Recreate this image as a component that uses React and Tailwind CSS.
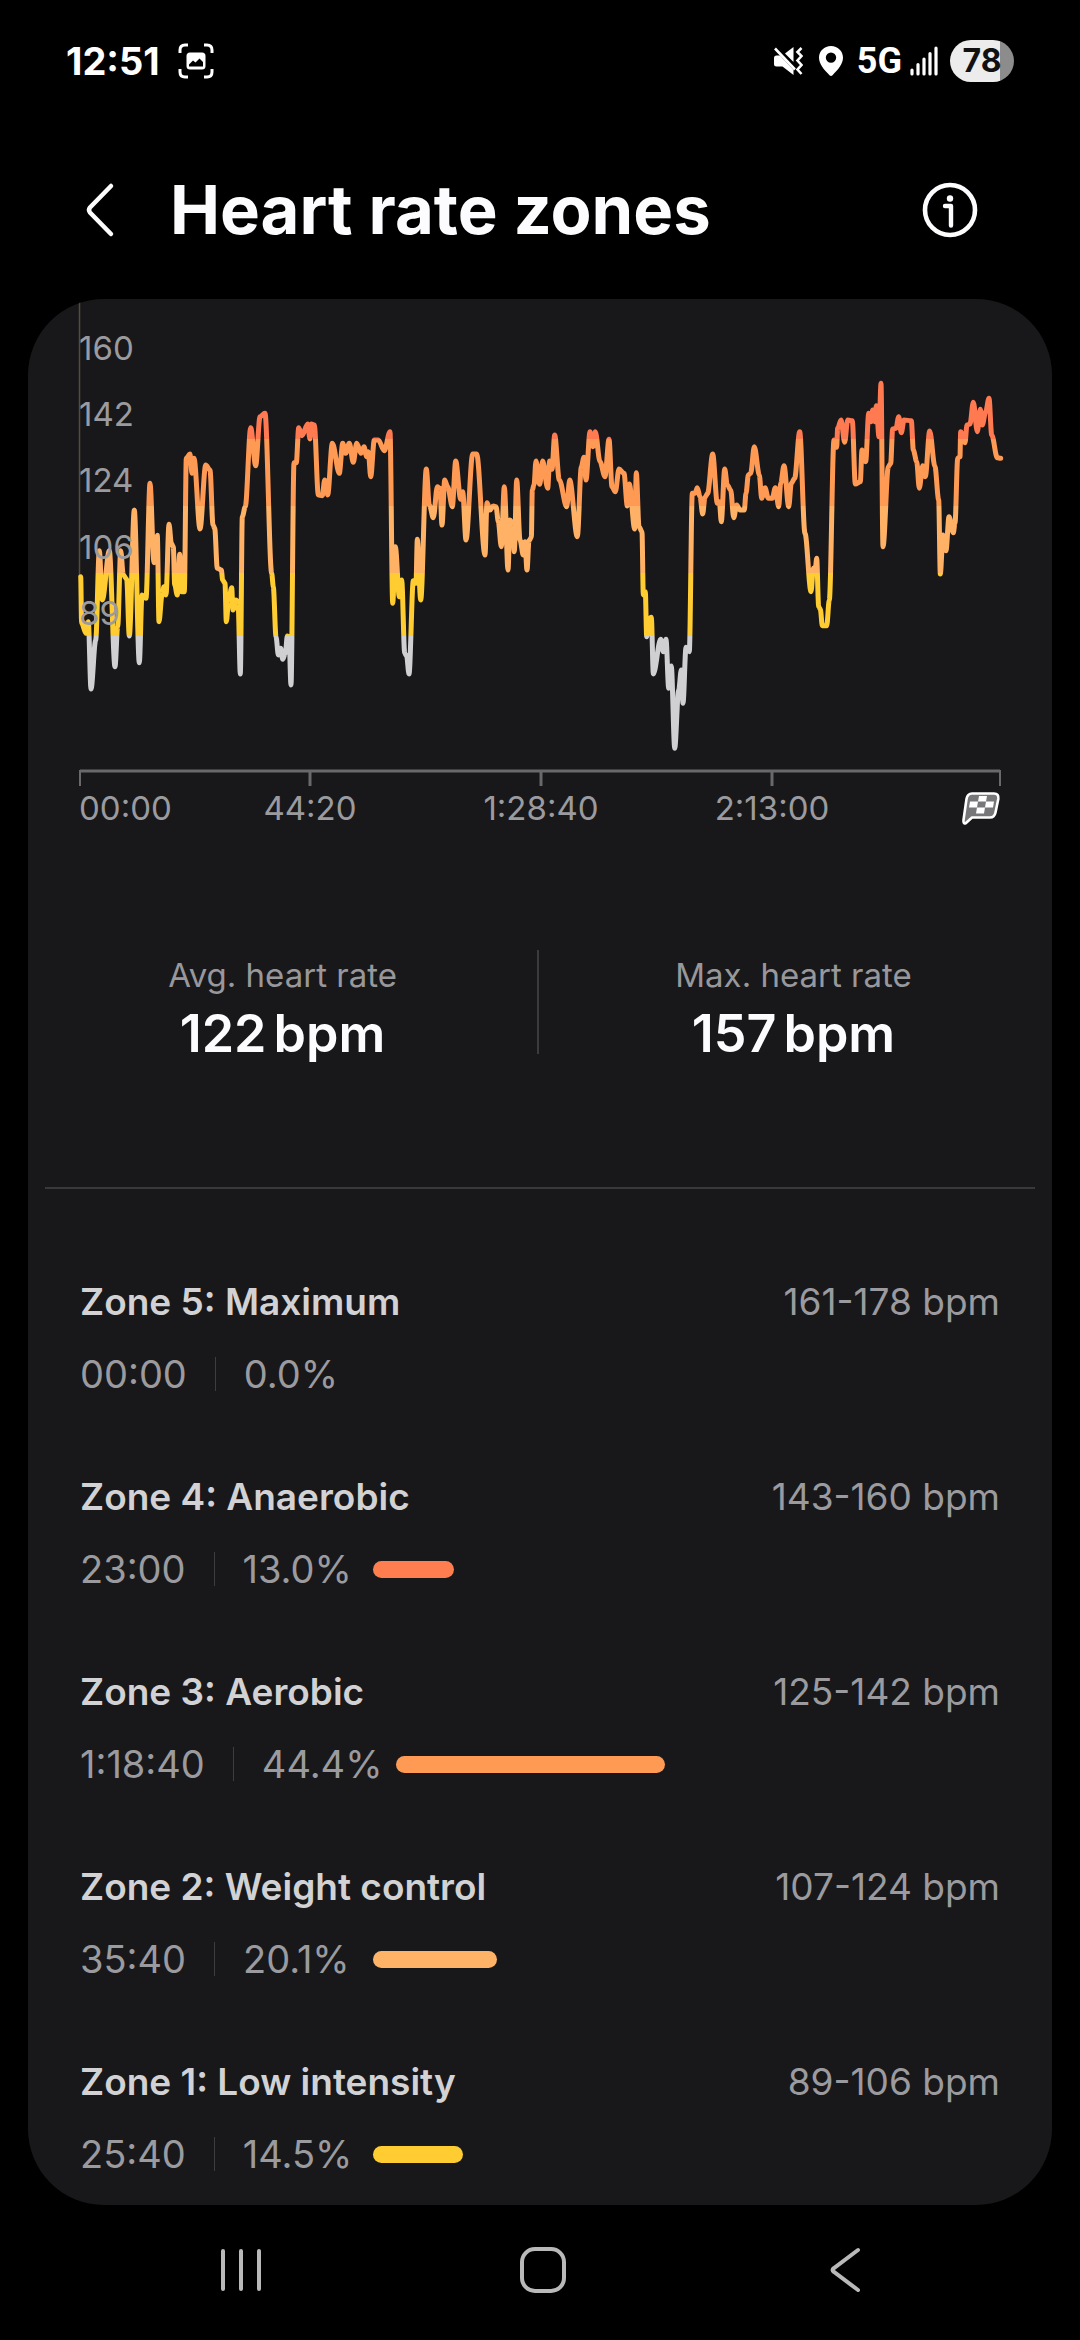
const ZONES = [
  { id: 5, name: "Maximum", range: "161-178 bpm", time: "00:00", percent: 0, color: "bg-[#ff5f4a]" },
  { id: 4, name: "Anaerobic", range: "143-160 bpm", time: "23:00", percent: 13, color: "bg-[#ff7e50]" },
  { id: 3, name: "Aerobic", range: "125-142 bpm", time: "1:18:40", percent: 44.4, color: "bg-[#ff9a54]" },
  { id: 2, name: "Weight control", range: "107-124 bpm", time: "35:40", percent: 20.1, color: "bg-[#ffb367]" },
  { id: 1, name: "Low intensity", range: "89-106 bpm", time: "25:40", percent: 14.5, color: "bg-[#ffcd32]" },
];

const Y_LABELS = [
  { value: 160, y: 61 },
  { value: 142, y: 127 },
  { value: 124, y: 193 },
  { value: 106, y: 260 },
  { value: 89, y: 326 },
];

const X_LABELS = [
  { text: "00:00", x: -1, anchor: "start" },
  { text: "44:20", x: 230, anchor: "middle" },
  { text: "1:28:40", x: 461, anchor: "middle" },
  { text: "2:13:00", x: 692, anchor: "middle" },
];

// The trace is kept in three legs, each with its own origin, at 3 units per px
const LEGS = [
  {
    dx: -20,
    dy: -9,
    points:
      "62,860 65,1000 78,1030 85,995 93,1197 107,1050 118,782 127,930 148,782 165,1130 173,1010 182,782 190,855 200,868 208,1038 223,660 238,1118 246,915 258,925 270,580 282,818 292,736 297,995 306,915 312,890 318,915 327,703 334,760 340,770 344,885 352,915 359,793 365,905 373,905 379,505 390,492 396,550 402,505 420,717 437,525 450,540 459,705 464,715 472,835 484,840 488,870 495,880 499,995 506,930 515,893 519,960 528,930 534,935 541,1152 547,680 556,650 572,413 587,527 600,380 615,370 635,850 640,890 648,1040 655,1095 662,1075 668,1108 676,1090 682,1038 687,1040 693,1185 702,518 709,518 716,413 726,437 743,402 750,447 754,402 763,405 775,615 787,617 794,570 803,615 817,460 838,550 848,460 857,490 868,460 880,517 890,460 903,490 912,470 920,500 925,485 932,560 943,450 955,450 973,482",
  },
  {
    dx: 280,
    dy: 71,
    points:
      "90,185 98,700 106,530 118,680 125,630 134,850 140,858 147,912 160,632 168,640 172,508 182,690 199,297 208,405 220,443 232,350 240,355 246,465 254,330 263,350 277,410 287,273 302,388 308,365 318,510 338,252 350,252 375,555 381,398 390,420 400,408 408,410 415,455 424,530 433,350 444,600 450,450 458,460 463,545 470,330 480,510 490,555 495,515 501,600 507,512 514,502 517,360 522,345 528,273 539,343 548,273 563,355 569,273 576,298 584,195 598,330 620,410 629,330 652,500 664,290 672,262 678,330 690,185 699,230 706,185 720,275 735,320 747,208 756,350 766,365 777,297 792,310 802,408 808,342 824,477 829,308 837,470 846,485 850,675 856,665 860,800 868,745 874,742 880,912 902,808 910,845 918,808 926,955 934,888 944,1135 956,960 964,900 969,1000 978,832 988,845",
  },
  {
    dx: 610,
    dy: 61,
    points:
      "7,400 15,400 22,383 30,410 38,462 45,412 53,400 68,282 82,430 88,425 94,485 104,327 112,375 122,390 131,473 140,435 150,450 163,450 168,400 175,345 182,340 193,260 208,345 215,415 225,383 235,415 247,415 256,383 266,440 272,370 282,317 296,440 304,370 314,355 329,215 345,520 363,695 370,625 375,640 380,595 386,740 391,748 397,797 410,797 418,720 432,240 440,262 443,205 453,180 464,247 473,180 487,182 496,372 511,365 516,270 527,305 536,160 543,185 548,150 554,185 559,137 567,230 573,70 579,560 595,320 602,310 608,207 618,205 626,170 634,218 642,180 664,182 670,270 680,305 688,385 698,317 706,350 719,213 735,320 746,420 751,642 759,525 768,572 777,470 790,518 795,490 803,295 810,290 812,215 825,248 831,195 840,192 850,127 862,215 871,148 877,195 887,155 897,115 905,225 922,293 932,295",
  },
];

const SAMPLES = LEGS.flatMap(({ dx, dy, points }) =>
  points.split(" ").map((pair) => {
    const [x, y] = pair.split(",").map(Number);
    return [dx + x / 3, dy + y / 3];
  })
);

function smoothPath(samples) {
  return samples
    .map(([x, y], i) => {
      if (i === 0) return `M${x.toFixed(1)} ${y.toFixed(1)}`;
      const [px, py] = samples[i - 1];
      const third = (x - px) / 3;
      return `C${(px + third).toFixed(1)} ${py.toFixed(1)} ${(x - third).toFixed(1)} ${y.toFixed(1)} ${x.toFixed(1)} ${y.toFixed(1)}`;
    })
    .join("");
}

function StatusBar() {
  return (
    <div className="flex items-center justify-between px-[66px] pt-[38px] text-white">
      <div className="flex items-center gap-[18px]">
        <span className="text-[38px] leading-[46px] font-bold">12:51</span>
        <svg width="36" height="36" viewBox="0 0 36 36" fill="none" aria-hidden="true">
          <path
            d="M2 10V7Q2 2 7 2H10M26 2H29Q34 2 34 7V10M34 26V29Q34 34 29 34H26M10 34H7Q2 34 2 29V26"
            stroke="currentColor"
            strokeWidth="3"
          />
          <rect x="8.500" y="9.500" width="19" height="17" rx="3.500" fill="currentColor" />
          <path d="M11 23.500V21.500L15 17.500L17.500 19.500L21.500 15.500L25 19V23.500Z" fill="#000" />
        </svg>
      </div>
      <div className="flex items-center">
        <svg width="30" height="30" viewBox="0 0 30 30" fill="none" aria-hidden="true">
          <path d="M1 12Q1 9.500 3.500 9.500H7L20.500 24V29L9.500 20.500H3.500Q1 20.500 1 18Z" fill="currentColor" />
          <path d="M12 7.500L20.500 1V16Z" fill="currentColor" />
          <path d="M2 2.500L22 23.500" stroke="currentColor" strokeWidth="2.600" />
          <path
            d="M28.500 2L24.500 6L28.500 10L24.500 14.500L28.500 19L24.500 23.500L28.500 28"
            stroke="currentColor"
            strokeWidth="2.600"
          />
        </svg>
        <svg className="ml-4" width="24" height="30" viewBox="0 0 24 30" aria-hidden="true">
          <path
            fillRule="evenodd"
            fill="currentColor"
            d="M12 0C5.200 0 0 5.200 0 11.600C0 18 5 24 10.500 29.200Q12 30.600 13.500 29.200C19 24 24 18 24 11.600C24 5.200 18.800 0 12 0ZM12 6.400A5.200 5.200 0 1 1 12 16.800A5.200 5.200 0 1 1 12 6.400Z"
          />
        </svg>
        <span className="ml-[14px] font-['Roboto',sans-serif] text-[36px] leading-[46px] font-bold">5G</span>
        <svg className="ml-2" width="28" height="30" viewBox="0 0 28 30" aria-hidden="true">
          <g stroke="currentColor" strokeWidth="3.200" strokeLinecap="round">
            <path d="M2 28V24M8 28V18.500M14 28V13M20 28V7.500M26 28V2" />
          </g>
        </svg>
        <div className="ml-3 flex h-[42px] w-[64px] items-center justify-center rounded-full bg-linear-to-r from-[#ececec] from-78% to-[#8c8c8c] to-78%">
          <span className="text-[32px] leading-none font-bold text-[#111]">78</span>
        </div>
      </div>
    </div>
  );
}

function Header() {
  return (
    <header className="flex items-center pt-[84px] pr-[102px] pb-[47px] pl-[82px]">
      <button type="button" aria-label="Back" className="text-[#fcfcff]">
        <svg width="34" height="56" viewBox="0 0 34 56" fill="none">
          <path d="M29 4L8 25.500Q6 28 8 30.500L29 52" stroke="currentColor" strokeWidth="4.500" strokeLinecap="round" />
        </svg>
      </button>
      <h1 className="ml-[54px] text-[67px] leading-[84px] font-bold text-[#fcfcff]">Heart rate zones</h1>
      <button type="button" aria-label="Information" className="ml-auto text-[#fcfcff]">
        <svg width="56" height="56" viewBox="0 0 56 56" fill="none">
          <circle cx="28" cy="28" r="25" stroke="currentColor" strokeWidth="4.600" />
          <circle cx="28" cy="16.500" r="3.200" fill="currentColor" />
          <path d="M23 24H29V43.500" stroke="currentColor" strokeWidth="4.400" strokeLinecap="round" strokeLinejoin="round" />
        </svg>
      </button>
    </header>
  );
}

function HeartRateChart() {
  return (
    <svg className="block h-auto w-full overflow-visible" viewBox="0 0 920 540" role="img" aria-label="Heart rate over time">
      <defs>
        <linearGradient id="zones" gradientUnits="userSpaceOnUse" x1="0" y1="0" x2="0" y2="500">
          <stop offset="0.280" stopColor="#ff7a50" />
          <stop offset="0.280" stopColor="#ff9a54" />
          <stop offset="0.414" stopColor="#ff9a54" />
          <stop offset="0.414" stopColor="#ffb266" />
          <stop offset="0.547" stopColor="#ffb266" />
          <stop offset="0.547" stopColor="#ffcd32" />
          <stop offset="0.674" stopColor="#ffcd32" />
          <stop offset="0.674" stopColor="#d0d0d2" />
        </linearGradient>
      </defs>
      <path d="M-0.500 0V320" stroke="#594a3d" strokeWidth="1.500" />
      <path d={smoothPath(SAMPLES)} fill="none" stroke="url(#zones)" strokeWidth="5" strokeLinejoin="round" strokeLinecap="round" />
      <g className="text-[33px]" fill="#9b9b9f">
        {Y_LABELS.map(({ value, y }) => (
          <text key={value} x="-1" y={y}>
            {value}
          </text>
        ))}
        {X_LABELS.map(({ text, x, anchor }) => (
          <text key={text} x={x} y="521" textAnchor={anchor}>
            {text}
          </text>
        ))}
      </g>
      <path d="M0 472H920" stroke="#69696b" strokeWidth="3" />
      <path d="M230 472V487M461 472V487M692 472V487" stroke="#69696b" strokeWidth="3" />
      <path d="M0 471V487M920 471V487" stroke="#69696b" strokeWidth="2" />
      {/* finish flag */}
      <g transform="translate(881 493)">
        <path
          d="M11 1.500H33Q38 1.500 37.300 7L34.500 20.500Q33.500 25.500 29 25.500H11L5 31Q2 32.500 2.500 28L5.500 7Q6.500 1.500 11 1.500Z"
          fill="#77777a"
          stroke="#fff"
          strokeWidth="2.600"
          strokeLinejoin="round"
        />
        <path
          d="M18 4H26L25 9.500H17ZM9 9.500H17L16 15.500H8ZM25 9.500H33L32 15.500H24ZM16 15.500H24L23 21.500H15Z"
          fill="#fff"
        />
      </g>
    </svg>
  );
}

function Stat({ label, value }) {
  return (
    <div className="flex flex-1 flex-col items-center gap-[5px] pt-[3px]">
      <dt className="text-[33px] leading-[44px] text-[#98989c]">{label}</dt>
      <dd className="flex gap-[7px] text-[52px] leading-[64px] font-semibold text-[#fcfcff]">
        <span>{value}</span>
        <span>bpm</span>
      </dd>
    </div>
  );
}

function Zone({ zone }) {
  return (
    <li className="flex flex-col gap-[26px]">
      <div className="flex items-center justify-between text-[37px] leading-[46px]">
        <h2 className="font-semibold text-[#d2d2d4]">
          Zone {zone.id}: {zone.name}
        </h2>
        <span className="text-[#9b9b9f]">{zone.range}</span>
      </div>
      <div className="flex items-center text-[38px] leading-[46px] text-[#9b9b9f]">
        <span>{zone.time}</span>
        <span className="mx-[28px] h-[34px] w-px bg-[#3d3d40]" />
        <span className="mr-[14px] min-w-[116px]">{zone.percent.toFixed(1)}%</span>
        {zone.percent > 0 && (
          <span className={`h-[17px] rounded-full ${zone.color}`} style={{ width: Math.round(zone.percent * 6 + 3) }} />
        )}
      </div>
    </li>
  );
}

function NavBar() {
  return (
    <nav className="grid grid-cols-3 justify-items-center pt-[40px] pr-[84px] pb-[45px] pl-[90px] text-[#b9b9b9]">
      <button type="button" aria-label="Recent apps">
        <svg width="50" height="50" viewBox="0 0 50 50" fill="none" stroke="currentColor" strokeWidth="4" strokeLinecap="round">
          <path d="M7 6V44M25 6V44M43 6V44" />
        </svg>
      </button>
      <button type="button" aria-label="Home">
        <svg width="50" height="50" viewBox="0 0 50 50" fill="none" stroke="currentColor" strokeWidth="4">
          <rect x="4" y="4" width="42" height="42" rx="13" />
        </svg>
      </button>
      <button type="button" aria-label="Back to previous screen">
        <svg width="50" height="50" viewBox="0 0 50 50" fill="none" stroke="currentColor" strokeWidth="4" strokeLinecap="round">
          <path d="M38 5L14 23Q11 25 14 27L38 45" />
        </svg>
      </button>
    </nav>
  );
}

export default function App() {
  return (
    <div className="flex min-h-screen flex-col bg-black font-['Inter',sans-serif]">
      <StatusBar />
      <Header />
      <main className="mx-[28px] flex-1 overflow-hidden rounded-[76px] bg-[#18181a] pb-[20px]">
        <section className="px-[52px]">
          <HeartRateChart />
        </section>
        <dl className="mt-[111px] mr-1 flex">
          <Stat label="Avg. heart rate" value="122" />
          <div className="h-[104px] w-[2px] bg-[#3b3b3e]" />
          <Stat label="Max. heart rate" value="157" />
        </dl>
        <hr className="mx-[17px] mt-[121px] border-t-2 border-[#39393b]" />
        <ul className="flex flex-col gap-[77px] px-[52px] pt-[90px]">
          {ZONES.map((zone) => (
            <Zone key={zone.id} zone={zone} />
          ))}
        </ul>
      </main>
      <NavBar />
    </div>
  );
}
